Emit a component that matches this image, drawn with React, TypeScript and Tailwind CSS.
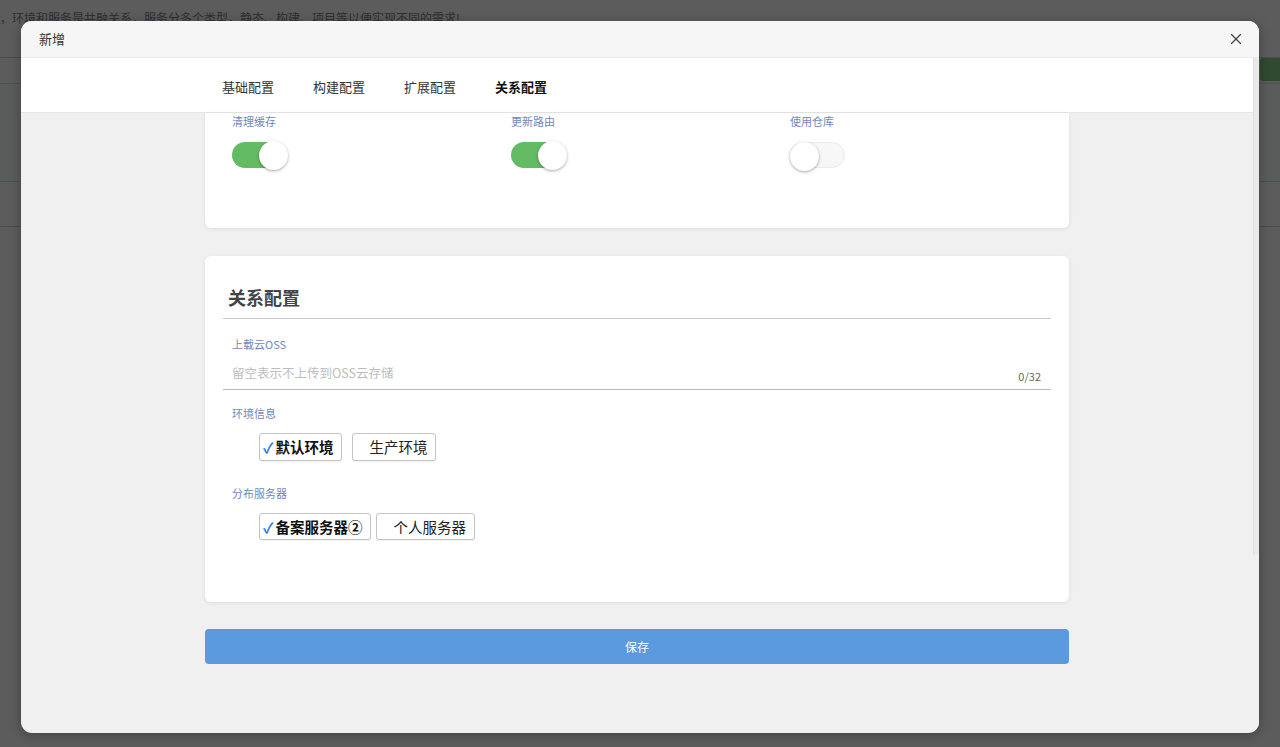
import React from "react";
import { X } from "lucide-react";

function Toggle({ on }: { on: boolean }) {
  return (
    <div
      className={
        "relative h-[26px] w-[55px] rounded-full " +
        (on ? "bg-[#63bb63]" : "bg-[#f7f7f7] border border-[#ececec]")
      }
    >
      <div
        className={
          "absolute top-[-1.5px] h-[29px] w-[29px] rounded-full bg-white shadow-[0_1px_3px_rgba(0,0,0,0.35)] " +
          (on ? "right-[-1px]" : "left-[-1px]")
        }
      />
    </div>
  );
}

function Label({ children }: { children: React.ReactNode }) {
  return <div className="text-[11px] leading-[14px] text-[#7088bb]">{children}</div>;
}

function CheckBtn({ checked, text, h }: { checked: boolean; text: string; h: string }) {
  return (
    <div
      className={
        "flex items-center rounded-[3px] border border-[#c4c4c4] bg-white pr-[8px] text-[14.5px] leading-[18px] shadow-[0_1px_1px_rgba(0,0,0,0.06)] " +
        h +
        (checked ? " pl-[3px] font-bold text-[#111]" : " pl-[16px] text-[#222]")
      }
    >
      {checked && <span className="mr-[2px] font-bold text-[#3b7ddd]">✓</span>}
      <span>{text}</span>
    </div>
  );
}

export default function App() {
  return (
    <div className="relative h-[747px] w-[1280px] overflow-hidden bg-[#5c5c5c] font-['Noto_Sans_CJK_SC',sans-serif]">
      {/* background page (under overlay) */}
      <div className="flex h-[57px] items-start pt-[11px] text-[12px] leading-[14px] text-[#303030] whitespace-nowrap">
        ，环境和服务是共融关系，服务分多个类型，静态、构建、项目等以便实现不同的需求!
      </div>
      <div className="flex h-[26px] justify-end border-t border-[#4d4d4d]">
        <div className="h-[23px] w-[20px] rounded-l-[3px] bg-[#2f4a30]" />
      </div>
      <div className="h-[98px] border-t border-[#4f4f4f] bg-[#5a5c5b]" />
      <div className="h-[45px] border-t border-[#44574f]" />
      <div className="border-t border-[#4d4d4d]" />

      {/* modal */}
      <div className="absolute left-[21px] top-[21px] flex h-[712px] w-[1238px] flex-col overflow-hidden rounded-[11px] bg-[#f0f0f0] shadow-[0_2px_12px_rgba(0,0,0,0.3)]">
        <div className="flex h-[37px] items-center justify-between border-b border-[#ebebeb] bg-[#f6f6f6] pl-[18px] pr-[14px]">
          <span className="text-[13px] text-[#333]">新增</span>
          <X size={18} strokeWidth={1.6} className="text-[#444]" />
        </div>
        <div className="flex flex-1">
          <div className="flex flex-1 flex-col">
            <div className="flex h-[55px] items-center gap-[39px] border-b border-[#e6e6e6] bg-white pl-[201px] pt-[3px] text-[13px] text-[#333]">
              <span>基础配置</span>
              <span>构建配置</span>
              <span>扩展配置</span>
              <span className="font-bold text-[#111]">关系配置</span>
            </div>
            <div className="flex flex-col items-center">
              {/* card 1 (scrolled, top hidden) */}
              <div className="h-[115px] w-[864px] rounded-b-[6px] bg-white pl-[27px] pt-[1px] shadow-[0_1px_4px_rgba(0,0,0,0.08)]">
                <div className="grid grid-cols-[279px_279px_279px]">
                  {[
                    ["清理缓存", true],
                    ["更新路由", true],
                    ["使用仓库", false],
                  ].map(([l, on]) => (
                    <div key={l as string} className="flex flex-col">
                      <Label>{l as string}</Label>
                      <div className="mt-[14px]">
                        <Toggle on={on as boolean} />
                      </div>
                    </div>
                  ))}
                </div>
              </div>

              {/* card 2 */}
              <div className="mt-[28px] h-[346px] w-[864px] rounded-[6px] bg-white px-[18px] pt-[29px] shadow-[0_1px_4px_rgba(0,0,0,0.08)]">
                <div className="pl-[5px] text-[18px] font-bold leading-[24px] text-[#444]">关系配置</div>
                <div className="mt-[9px] border-t border-[#c9c9c9]" />
                <div className="mt-[18px] pl-[9px]">
                  <Label>上载云OSS</Label>
                </div>
                <div className="flex h-[39px] justify-between border-b border-[#bdbdbd] pl-[9px] pr-[10px]">
                  <span className="mt-[13px] text-[12.5px] leading-[18px] text-[#bdbdbd]">留空表示不上传到OSS云存储</span>
                  <span className="mb-[6px] self-end text-[11px] leading-[14px] text-[#666]">0/32</span>
                </div>
                <div className="mt-[16px] pl-[9px]">
                  <Label>环境信息</Label>
                </div>
                <div className="mt-[13px] flex gap-[10px] pl-[36px]">
                  <CheckBtn checked text="默认环境" h="h-[28px]" />
                  <CheckBtn checked={false} text="生产环境" h="h-[28px]" />
                </div>
                <div className="mt-[25px] pl-[9px]">
                  <Label>分布服务器</Label>
                </div>
                <div className="mt-[13px] flex gap-[5px] pl-[36px]">
                  <CheckBtn checked text="备案服务器②" h="h-[27px]" />
                  <CheckBtn checked={false} text="个人服务器" h="h-[27px]" />
                </div>
              </div>

              <div className="mt-[27px] flex h-[35px] w-[864px] items-center justify-center rounded-[4px] bg-[#5b9ade] text-[12px] text-white">
                保存
              </div>
            </div>
          </div>
          {/* scrollbar */}
          <div className="flex w-[6px] flex-col bg-[#f0f0f0]">
            <div className="h-[497px] rounded-b-[2px] border-l border-[#e0e0e0] bg-[#e9e9e9]" />
          </div>
        </div>
      </div>
    </div>
  );
}
